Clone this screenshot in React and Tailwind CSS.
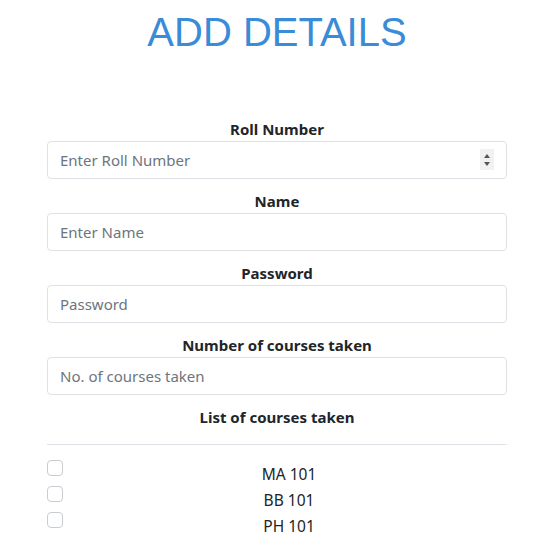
import React from "react";

const fields = [
  { label: "Roll Number", placeholder: "Enter Roll Number", type: "number" },
  { label: "Name", placeholder: "Enter Name", type: "text" },
  { label: "Password", placeholder: "Password", type: "password" },
  { label: "Number of courses taken", placeholder: "No. of courses taken", type: "text" },
];

const courses = ["MA 101", "BB 101", "PH 101"];

const App = () => {
  return (
    <div className="h-[538px] overflow-hidden bg-white text-[#212529]" style={{ fontFamily: '"Noto Sans", "Open Sans", sans-serif' }}>
      <h1 className="pl-[14px] pt-[7px] text-center text-[40px] leading-[50px] text-[#3a8bd8] font-['Liberation_Sans',Arial,sans-serif]">
        ADD DETAILS
      </h1>

      <form className="ml-[47px] mr-[33px] mt-[60px] flex flex-col">
        {fields.map((f) => (
          <div key={f.label} className="mb-[10px] flex flex-col">
            <label className="text-center text-[15px] font-bold leading-[24px]">{f.label}</label>
            <div className="relative">
              <input
                type="text"
                placeholder={f.placeholder}
                className="block h-[38px] w-full rounded-[4px] border border-[#dee2e6] px-3 text-[15px] placeholder:text-[#6c757d] focus:outline-none"
              />
              {f.type === "number" && (
                <div className="absolute right-[13px] top-[8px] flex h-[21px] w-[14px] flex-col items-center justify-center gap-[4px] bg-[#f1f1f1]">
                  <span className="h-0 w-0 border-x-[3px] border-b-[4px] border-x-transparent border-b-[#555]" />
                  <span className="h-0 w-0 border-x-[3px] border-t-[4px] border-x-transparent border-t-[#555]" />
                </div>
              )}
            </div>
          </div>
        ))}

        <div className="text-center text-[15px] font-bold leading-[24px]">List of courses taken</div>
        <hr className="mt-[15px] border-t border-[#dee2e6]" />

        <div className="mt-[15px] flex flex-col">
          {courses.map((c) => (
            <div key={c} className="flex h-[26px] items-start">
              <span className="h-[16px] w-[16px] shrink-0 rounded-[4px] border border-[#c8cdd2] bg-white" />
              <span className="ml-[8px] flex-1 pt-[2px] text-center text-[15.5px] leading-[24px]">{c}</span>
            </div>
          ))}
        </div>
      </form>
    </div>
  );
};

export default App;
